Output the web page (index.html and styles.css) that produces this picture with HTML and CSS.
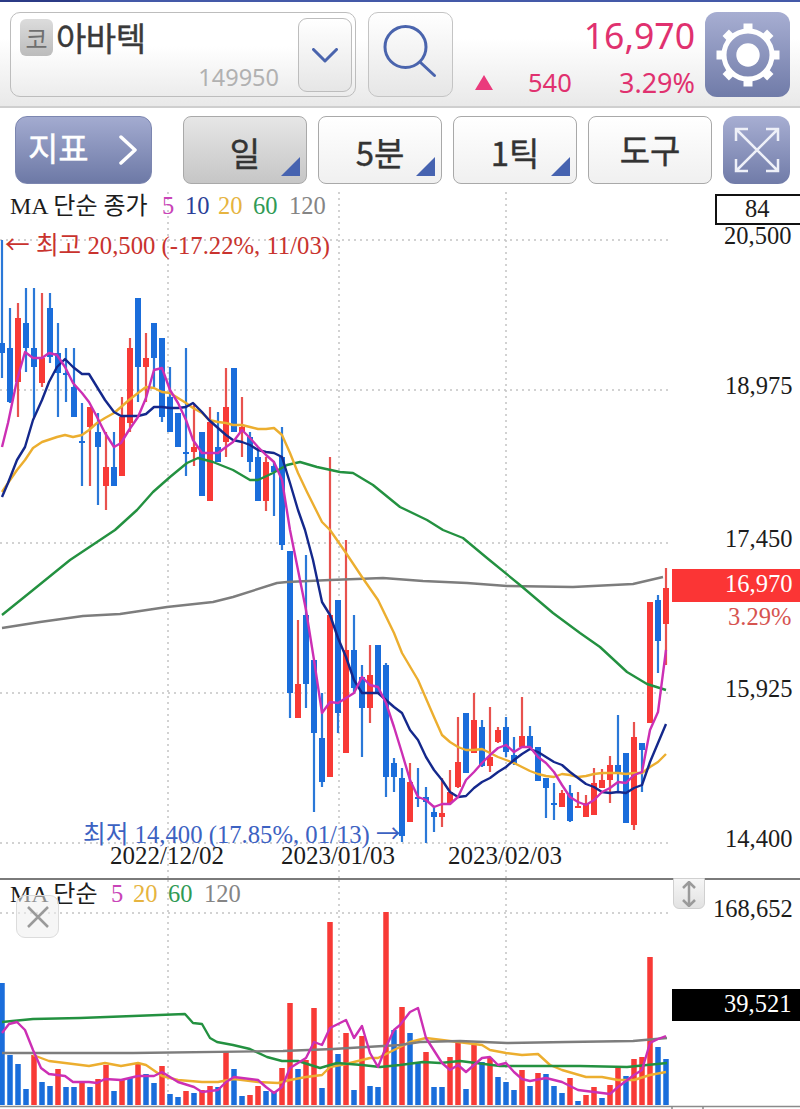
FILE: index.html
```html
<!DOCTYPE html>
<html lang="ko">
<head>
<meta charset="utf-8">
<title>아바텍 차트</title>
<link rel="stylesheet" href="styles.css">
</head>
<body>
<div class="app">
  <div class="topline"></div>
  <header class="header">
    <div class="stock">
      <div class="stock-info">
        <div class="stock-name"><span class="badge">코</span><span class="name">아바텍</span></div>
        <div class="code">149950</div>
      </div>
      <button class="dropdown" type="button">
        <svg class="icon" width="26" height="15" viewBox="0 0 26 15"><path class="ink" d="M1.5 1.5L13 13L24.5 1.5"/></svg>
      </button>
    </div>
    <button class="search" type="button">
      <svg class="icon" width="68" height="68" viewBox="0 0 68 68"><circle class="ink" cx="28.5" cy="26" r="20.5"/><path class="ink" d="M43.5 41.5L57.5 54.5"/></svg>
    </button>
    <div class="quote">
      <div class="price">16,970</div>
      <div class="change"><span class="tri"></span><span class="diff">540</span><span class="pct">3.29%</span></div>
    </div>
    <button class="gear" type="button">
      <svg width="66" height="66" viewBox="-33 -33 66 66">
        <g class="teeth">
          <path d="M0 -31.5V-22"/><path d="M0 -31.5V-22" transform="rotate(45)"/><path d="M0 -31.5V-22" transform="rotate(90)"/><path d="M0 -31.5V-22" transform="rotate(135)"/>
          <path d="M0 -31.5V-22" transform="rotate(180)"/><path d="M0 -31.5V-22" transform="rotate(225)"/><path d="M0 -31.5V-22" transform="rotate(270)"/><path d="M0 -31.5V-22" transform="rotate(315)"/>
        </g>
        <circle class="gear-ring" r="24"/>
        <circle class="gear-hub" r="11.7"/>
      </svg>
    </button>
  </header>

  <nav class="toolbar">
    <button class="tool-primary" type="button"><span class="primary-label">지표</span>
      <svg width="18" height="30" viewBox="0 0 18 30"><path class="white-line" d="M2 2L16 15L2 28"/></svg>
    </button>
    <div class="tabs">
      <button class="tab active" type="button">일</button>
      <button class="tab" type="button">5분</button>
      <button class="tab" type="button">1틱</button>
      <button class="tab plain" type="button">도구</button>
    </div>
    <button class="tool-expand" type="button">
      <svg width="46" height="46" viewBox="0 0 46 46">
        <path class="white-thin" d="M2 2L44 44M44 2L2 44M2 14V2H14M32 2H44V14M44 32V44H32M14 44H2V32"/>
      </svg>
    </button>
  </nav>

  <section class="pane pane-main">
    <svg class="chart" width="800" height="686" viewBox="0 192 800 686">
      <path class="grid" d="M0 240H672M0 390H672M0 543H672M0 693H672M0 843H672M168 192V878M339 192V878M506 192V878"/>
      <path class="wick wick-blue" d="M2 240V378M10 308V403M26 288V372M34 288V417M50 293V363M58 323V417M66 348V402M74 348V417M82 403V486M98 413V505M114 432V486M138 298V402M154 323V387M162 338V422M170 367V432M178 413V447M186 348V476M202 432V496M218 412V462M234 368V432M250 432V472M258 447V501M274 462V516M282 427V550M290 551V718M306 555V708M314 660V812M322 693V787M338 600V733M354 615V693M362 665V757M378 645V693M386 663V797M394 758V792M402 768V842M418 768V807M426 787V843M434 807V832M466 713V773M482 720V767M506 717V757M514 737V765M530 726V750M538 747V781M546 778V818M554 783V820M570 785V822M618 715V792M626 753V823M642 743V792M658 595V673"/>
      <path class="wick wick-red" d="M18 303V417M42 293V387M90 407V486M106 432V510M122 397V476M130 338V432M146 333V402M194 403V466M210 407V501M226 368V457M242 397V457M266 457V511M298 620V718M330 457V777M346 540V753M370 645V723M410 763V822M442 778V827M450 770V805M458 717V788M474 693V753M490 707V772M498 727V743M522 697V747M562 790V807M578 792V808M586 795V817M594 768V815M602 769V788M610 756V803M634 722V830M650 602V723M666 568V665"/>
      <path class="body body-blue" d="M2 343V353M10 348V402M26 323V348M34 348V367M50 308V357M58 353V373M66 373V375M74 387V417M82 441V443M98 432V447M114 467V486M138 298V367M154 323V358M162 338V417M170 397V432M178 413V447M186 452V454M202 432V496M218 447V462M234 368V432M250 437V462M258 457V501M274 466V472M282 457V545M290 551V693M306 615V684M314 660V733M322 738V782M338 600V713M354 650V688M362 677V708M378 645V693M386 665V777M394 763V777M402 778V836M418 797V799M426 797V802M434 812V817M466 713V773M482 727V766M506 727V752M514 755V763M530 736V748M538 747V781M546 778V788M554 803V805M570 793V821M618 765V772M626 753V823M642 743V750M658 600V641"/>
      <path class="body body-red" d="M18 318V382M42 358V383M90 407V427M106 467V486M122 417V476M130 348V423M146 358V367M194 447V452M210 422V501M226 407V442M242 427V432M266 462V501M298 684V718M330 615V777M346 650V753M370 675V708M410 782V822M442 813V817M450 792V803M458 762V787M474 720V753M490 757V766M498 730V742M522 736V747M562 793V807M578 806V808M586 803V817M594 783V815M602 780V788M610 765V780M634 737V825M650 602V723M666 588V624"/>
      <polyline class="ma ma120" points="2,628 40,622 83,616 120,614 167,607 213,602 233,597 277,583 287,582 330,580 383,578 423,581 467,583 507,586 573,587 633,584 663,577"/>
      <polyline class="ma ma60" points="2,615 33,590 70,560 115,530 137,510 153,492 170,477 187,463 198,458 213,462 233,470 250,480 258,480 273,473 287,465 300,462 317,467 340,472 353,473 373,485 400,507 427,520 443,530 463,538 487,558 520,585 553,613 580,633 600,647 627,672 647,684 666,690"/>
      <polyline class="ma ma20" points="2,492 8,483 17,470 25,460 33,448 42,442 57,437 65,435 73,437 82,435 89,430 97,423 105,418 114,413 121,407 129,400 138,393 146,387 154,388 162,392 170,393 178,398 186,403 193,408 202,413 209,420 218,422 226,423 233,425 242,425 250,427 258,429 266,429 274,428 282,435 290,453 298,473 307,492 315,508 322,522 330,530 346,553 362,577 378,600 394,633 402,653 418,680 434,717 442,735 450,742 458,747 466,750 474,750 482,749 490,753 498,757 506,760 514,763 522,767 530,771 538,774 546,776 554,777 562,774 570,775 578,777 586,776 594,774 602,773 618,773 626,774 634,773 642,773 650,767 658,762 666,754"/>
      <polyline class="ma ma10" points="2,497 8,483 17,460 25,447 33,420 42,400 49,382 57,367 65,359 73,367 82,374 89,374 97,387 105,400 114,412 121,416 129,416 138,416 146,414 154,407 162,407 170,408 178,408 186,407 193,403 202,412 209,420 218,428 226,435 233,440 242,442 250,445 258,450 266,452 274,453 282,457 290,483 298,510 305,530 313,560 322,602 330,615 338,638 346,657 354,680 362,693 370,693 378,693 386,700 394,707 402,713 410,730 418,740 426,757 434,770 442,780 450,792 458,797 466,796 474,788 482,782 490,778 498,772 506,767 514,760 522,754 530,749 538,752 546,757 554,762 562,765 570,772 578,778 586,784 594,787 602,792 610,793 618,792 626,793 634,788 642,785 650,762 658,743 666,724"/>
      <polyline class="ma ma5" points="2,447 8,423 17,380 25,352 33,358 42,358 49,353 57,355 65,367 73,383 82,393 89,402 97,417 105,433 114,447 121,443 129,430 138,417 146,398 154,370 162,368 170,390 178,403 186,420 193,440 202,453 209,453 218,453 226,447 233,442 242,430 250,438 258,447 266,455 274,462 282,480 290,530 306,610 314,660 322,713 330,702 338,703 346,698 354,693 362,677 370,685 378,687 386,703 394,727 402,753 410,780 418,797 426,800 434,807 442,804 450,804 458,797 466,780 474,772 482,763 490,755 498,748 506,745 514,752 522,747 530,747 538,757 546,763 554,772 562,785 570,797 578,802 586,805 594,800 602,792 610,788 618,782 626,783 634,775 642,772 650,730 658,712 666,650"/>

      <text class="t legend" x="10" y="214">MA 단순 종가</text>
      <text class="t c5" x="162" y="214">5</text>
      <text class="t c10" x="185" y="214">10</text>
      <text class="t c20" x="218" y="214">20</text>
      <text class="t c60" x="253" y="214">60</text>
      <text class="t c120" x="289" y="214">120</text>
      <text class="t note hi" x="5" y="254"><tspan class="arrow">←</tspan> 최고 20,500 (-17.22%, 11/03)</text>
      <text class="t note lo" x="83" y="843">최저 14,400 (17.85%, 01/13) <tspan class="arrow">→</tspan></text>
      <text class="t wide" x="110" y="864">2022/12/02</text>
      <text class="t wide" x="281" y="864">2023/01/03</text>
      <text class="t wide" x="448" y="864">2023/02/03</text>

      <rect class="box" x="716" y="195" width="90" height="29"/>
      <text class="t" x="745" y="217">84</text>
      <text class="t" x="724" y="244">20,500</text>
      <text class="t" x="725" y="394">18,975</text>
      <text class="t" x="725" y="547">17,450</text>
      <rect class="last" x="672" y="569" width="128" height="33"/>
      <text class="t inv" x="725" y="592">16,970</text>
      <text class="t pct-label" x="728" y="625">3.29%</text>
      <text class="t" x="725" y="697">15,925</text>
      <text class="t" x="725" y="847">14,400</text>
    </svg>
  </section>

  <section class="pane pane-vol">
    <svg class="chart" width="800" height="231" viewBox="0 878 800 231">
      <path class="frame" d="M0 879H800"/>
      <path class="grid" d="M0 913H672M168 880V1105M339 880V1105M506 880V1105"/>
      <path class="bar bar-blue" d="M2 983V1105M10 1055V1105M18 1064V1105M26 1089V1105M42 1082V1105M50 1086V1105M66 1087V1105M74 1087V1105M90 1087V1105M114 1091V1105M130 1078V1105M146 1074V1105M154 1083V1105M170 1094V1105M178 1097V1105M194 1093V1105M218 1087V1105M234 1069V1105M242 1096V1105M266 1091V1105M274 1092V1105M298 1069V1105M322 1088V1105M338 1054V1105M354 1090V1105M370 1086V1105M378 1087V1105M394 1030V1105M410 1033V1105M418 1063V1105M434 1087V1105M442 1087V1105M466 1089V1105M482 1062V1105M498 1077V1105M506 1082V1105M514 1090V1105M530 1086V1105M546 1074V1105M554 1086V1105M562 1093V1105M578 1101V1105M602 1098V1105M626 1076V1105M658 1047V1105M666 1059V1105"/>
      <path class="bar bar-red" d="M34 1055V1105M58 1069V1105M82 1082V1105M98 1079V1105M106 1065V1105M122 1080V1105M138 1064V1105M162 1066V1105M186 1091V1105M202 1090V1105M210 1086V1105M226 1052V1105M250 1095V1105M258 1086V1105M282 1068V1105M290 1003V1105M306 1060V1105M314 1008V1105M330 922V1105M346 1033V1105M362 1036V1105M386 912V1105M402 1007V1105M426 1052V1105M450 1057V1105M458 1043V1105M474 1045V1105M490 1058V1105M522 1070V1105M538 1073V1105M570 1078V1105M586 1095V1105M594 1087V1105M610 1085V1105M618 1068V1105M634 1059V1105M642 1057V1105M650 957V1105"/>
      <polyline class="ma ma20" points="33,1055 49,1061 65,1063 89,1066 105,1063 121,1066 138,1063 146,1065 162,1076 178,1080 202,1082 218,1082 234,1079 258,1082 278,1083 290,1080 306,1077 322,1075 330,1067 346,1064 370,1058 378,1058 400,1047 410,1042 426,1038 442,1040 466,1043 482,1045 490,1050 506,1053 522,1055 538,1054 550,1065 562,1070 586,1077 602,1077 618,1080 634,1080 650,1075 666,1072"/>
      <polyline class="ma ma60" points="2,1022 33,1019 80,1018 133,1016 185,1014 193,1023 202,1024 210,1038 217,1042 233,1045 250,1049 267,1057 282,1061 298,1061 320,1068 337,1063 362,1065 380,1067 400,1065 423,1062 440,1063 460,1061 500,1066 580,1066 627,1067 667,1063"/>
      <polyline class="ma ma120" points="2,1053 133,1053 283,1051 333,1049 400,1045 420,1042 460,1041 507,1043 567,1042 633,1041 667,1038"/>
      <polyline class="ma ma5" points="2,1033 9,1024 17,1022 25,1030 33,1050 41,1068 49,1074 65,1076 73,1082 89,1082 97,1083 105,1079 121,1080 138,1076 154,1076 162,1072 170,1077 178,1082 194,1087 202,1092 218,1090 226,1082 234,1077 258,1080 266,1087 274,1093 282,1087 290,1068 306,1058 314,1042 322,1045 330,1028 346,1020 354,1038 362,1026 370,1053 378,1067 386,1047 394,1030 400,1025 410,1012 418,1008 426,1038 442,1063 450,1070 458,1065 466,1072 474,1065 482,1058 490,1057 498,1065 506,1063 514,1072 522,1079 530,1081 546,1078 562,1082 578,1090 594,1092 610,1094 618,1087 634,1075 642,1070 650,1043 658,1039 666,1036"/>
      <path class="frame-bottom" d="M0 1106.5H800M672 1106V1109M703 1106V1109"/>

      <text class="t legend" x="10" y="902">MA 단순</text>
      <text class="t c5" x="111" y="902">5</text>
      <text class="t c20" x="133" y="902">20</text>
      <text class="t c60" x="168" y="902">60</text>
      <text class="t c120" x="204" y="902">120</text>
      <text class="t" x="713" y="917">168,652</text>
      <rect class="black" x="672" y="989" width="128" height="32"/>
      <text class="t inv" x="724" y="1012">39,521</text>
    </svg>
    <button class="overlay-close" type="button">
      <svg width="26" height="26" viewBox="0 0 26 26"><path class="grey-line" d="M3 3L23 23M23 3L3 23"/></svg>
    </button>
    <button class="overlay-scale" type="button">
      <svg width="14" height="26" viewBox="0 0 14 26"><path class="grey-line" d="M7 1V25M1 7L7 1L13 7M1 19L7 25L13 19"/></svg>
    </button>
  </section>
</div>
</body>
</html>
```

FILE: styles.css
```css
* { box-sizing: border-box; }
html, body { margin: 0; padding: 0; background: #fff; }
button { padding: 0; margin: 0; font: inherit; cursor: pointer; }
.app {
  width: 800px;
  height: 1109px;
  overflow: hidden;
  background: #fff;
  font-family: "Noto Sans CJK KR", "Noto Sans", sans-serif;
}
.topline { height: 2px; background: linear-gradient(90deg, #2b3a85 0, #2b3a85 80px, #4459a8 80px); }

/* header */
.header {
  height: 106px;
  padding: 10px 10px 0;
  display: flex;
  align-items: flex-start;
  background: linear-gradient(180deg, #fff 0, #fff 35%, #e9e9e9 100%);
  border-bottom: 2px solid #cfcfcf;
}
.stock {
  width: 346px;
  height: 85px;
  flex: none;
  padding: 5px 3px 5px 9px;
  display: flex;
  justify-content: space-between;
  border: 1.5px solid #bdbdbd;
  border-radius: 10px;
  background: linear-gradient(180deg, #fff 0, #fff 40%, #ececec 100%);
}
.stock-info { flex: 1; display: flex; flex-direction: column; justify-content: space-between; }
.stock-name { display: flex; align-items: flex-start; gap: 3px; }
.badge {
  width: 33px;
  height: 37px;
  margin-top: 1px;
  display: flex;
  align-items: center;
  justify-content: center;
  border-radius: 6px;
  background: linear-gradient(180deg, #dcdcdc, #bcbcbc);
  color: #6f6f6f;
  font-size: 24px;
  line-height: 1;
}
.name { font-size: 33px; line-height: 38px; letter-spacing: -0.5px; color: #3a3a3a; -webkit-text-stroke: 0.4px #3a3a3a; }
.code { align-self: flex-end; margin-right: 19px; font-family: "Noto Sans", sans-serif; font-size: 23.5px; line-height: 28px; color: #b1b1b1; }
.dropdown {
  width: 54px;
  height: 74px;
  flex: none;
  display: flex;
  align-items: center;
  justify-content: center;
  border: 1.5px solid #bdbdbd;
  border-radius: 9px;
  background: linear-gradient(180deg, #fff, #e6e6e6);
}
.icon { display: block; fill: none; }
.ink { fill: none; stroke: #4a64ad; stroke-width: 3; stroke-linecap: round; stroke-linejoin: round; }
.search {
  width: 85px;
  height: 85px;
  margin-left: 12px;
  flex: none;
  display: flex;
  align-items: center;
  justify-content: center;
  border: 1.5px solid #c4c4c4;
  border-radius: 10px;
  background: linear-gradient(180deg, #fff, #e6e6e6);
}
.quote {
  width: 252px;
  height: 85px;
  flex: none;
  padding-right: 10px;
  display: flex;
  flex-direction: column;
  justify-content: space-between;
  color: #e0316f;
}
.price { align-self: flex-end; font-size: 35.6px; line-height: 46px; font-family: "Noto Sans", sans-serif; }
.change {
  height: 30px;
  padding-left: 22px;
  display: flex;
  align-items: center;
  font-family: "Noto Sans", sans-serif;
}
.tri { width: 0; height: 0; border-left: 9.5px solid transparent; border-right: 9.5px solid transparent; border-bottom: 15px solid #ea3a7c; }
.diff { margin-left: 35px; font-size: 25.5px; }
.pct { margin-left: auto; font-size: 27px; }
.gear {
  width: 85px;
  height: 85px;
  flex: none;
  display: flex;
  align-items: center;
  justify-content: center;
  border: 0;
  border-radius: 12px;
  background: linear-gradient(180deg, #a7aed2, #707ba8);
}
.teeth path { stroke: #fff; stroke-width: 9; fill: none; }
.gear-ring { fill: none; stroke: #fff; stroke-width: 5; }
.gear-hub { fill: #fff; }

/* toolbar */
.toolbar {
  height: 84px;
  padding: 8px 10px 0 15px;
  display: flex;
  align-items: flex-start;
  background: #fff;
}
.tool-primary {
  width: 137px;
  height: 68px;
  flex: none;
  padding: 0 14px 0 12px;
  display: flex;
  align-items: center;
  justify-content: space-between;
  border: 1px solid #7c86b0;
  border-radius: 12px;
  background: linear-gradient(180deg, #a3abd0, #6d79a6);
  color: #fff;
  font-size: 33px;
}
.primary-label { margin-top: -6px; -webkit-text-stroke: 0.4px #fff; }
.white-line { fill: none; stroke: #fff; stroke-width: 3.5; stroke-linecap: round; stroke-linejoin: round; }
.tabs { margin-left: 31px; display: flex; gap: 11px; flex: none; }
.tab {
  position: relative;
  width: 124px;
  height: 68px;
  padding-top: 3px;
  display: flex;
  align-items: center;
  justify-content: center;
  border: 1.5px solid #a9a9a9;
  border-radius: 8px;
  background: linear-gradient(180deg, #fff, #f0f0f0);
  color: #333;
  font-size: 33px;
  -webkit-text-stroke: 0.4px #333;
}
.tab::after {
  content: "";
  position: absolute;
  right: 6px;
  bottom: 7px;
  width: 0;
  height: 0;
  border-left: 19px solid transparent;
  border-bottom: 19px solid #4663b0;
}
.tab.plain { padding-top: 0; padding-bottom: 3px; }
.tab.plain::after { display: none; }
.tab.active { background: linear-gradient(180deg, #e6e6e6, #c6c6c6); }
.tool-expand {
  width: 67px;
  height: 68px;
  margin-left: 11px;
  flex: none;
  display: flex;
  align-items: center;
  justify-content: center;
  border: 0;
  border-radius: 12px;
  background: linear-gradient(180deg, #a7aed2, #707ba8);
}
.white-thin { fill: none; stroke: #eef0f8; stroke-width: 2.5; }

/* charts */
.pane { position: relative; }
.pane-main { height: 686px; }
.pane-vol { height: 231px; }
.chart { display: block; }
.grid { fill: none; stroke: #c4c4c4; stroke-width: 1.5; stroke-dasharray: 2 4; }
.wick { fill: none; stroke-width: 2.2; }
.wick-blue { stroke: #2a78d8; }
.wick-red { stroke: #e8524e; }
.body { fill: none; stroke-width: 6; }
.body-blue, .bar-blue { stroke: #1a6ddb; }
.body-red, .bar-red { stroke: #f83a36; }
.bar { fill: none; stroke-width: 5.5; }
.ma { fill: none; stroke-width: 2.4; stroke-linejoin: round; }
.ma5 { stroke: #cc2fb4; }
.ma10 { stroke: #14288c; }
.ma20 { stroke: #ecae2f; }
.ma60 { stroke: #239140; }
.ma120 { stroke: #7d7d7d; }
.t {
  font-family: "Liberation Serif", "Noto Sans CJK KR", serif;
  font-size: 24.5px;
  fill: #1c1c1c;
}
.legend { font-size: 24px; }
.wide { font-size: 25px; }
.note { font-size: 24.7px; }
.arrow { font-family: "Noto Sans CJK KR", sans-serif; }
.c5 { fill: #c944b8; }
.c10 { fill: #2a3f98; }
.c20 { fill: #e6b440; }
.c60 { fill: #2f9a55; }
.c120 { fill: #858585; }
.hi { fill: #c9332e; }
.lo { fill: #3c62c2; }
.inv { fill: #fff; }
.pct-label { fill: #d65450; }
.box { fill: #fff; stroke: #111; stroke-width: 2; }
.last { fill: #fb3535; }
.black { fill: #000; }
.frame { fill: none; stroke: #7a7a7a; stroke-width: 2; }
.frame-bottom { fill: none; stroke: #8a8a8a; stroke-width: 1.5; }
.grey-line { fill: none; stroke: #9a9a9a; stroke-width: 2.5; }
.overlay-close {
  position: absolute;
  left: 16px;
  top: 17px;
  width: 43px;
  height: 43px;
  display: flex;
  align-items: center;
  justify-content: center;
  border: 1.5px solid #dcdcdc;
  border-radius: 9px;
  background: rgba(238, 238, 238, 0.55);
}
.overlay-scale {
  position: absolute;
  left: 673px;
  top: 0;
  width: 32px;
  height: 31px;
  display: flex;
  align-items: center;
  justify-content: center;
  border: 1.5px solid #d0d0d0;
  border-radius: 0 0 6px 6px;
  background: linear-gradient(180deg, #f6f6f6, #e2e2e2);
}
```
